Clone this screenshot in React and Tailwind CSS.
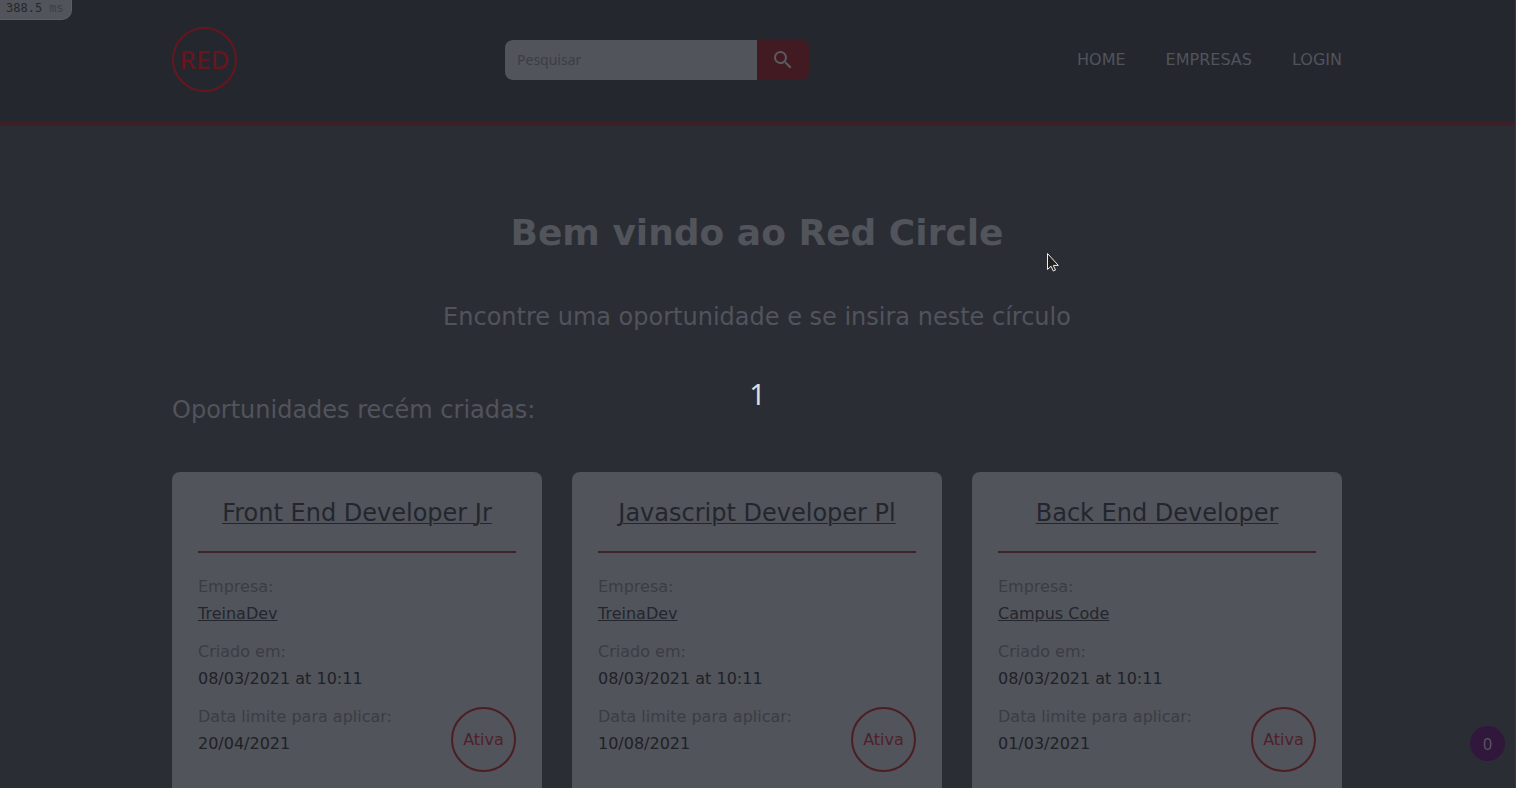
const jobs = [
  { title: "Front End Developer Jr", company: "TreinaDev", created: "08/03/2021 at 10:11", limit: "20/04/2021" },
  { title: "Javascript Developer Pl", company: "TreinaDev", created: "08/03/2021 at 10:11", limit: "10/08/2021" },
  { title: "Back End Developer", company: "Campus Code", created: "08/03/2021 at 10:11", limit: "01/03/2021" },
];

function Field({ label, children }) {
  return (
    <div className="mb-[11px] leading-[27px]">
      <dt className="text-[#3a3d42]">{label}</dt>
      <dd className="text-[#1f2126]">{children}</dd>
    </div>
  );
}

function JobCard({ job }) {
  return (
    <article className="relative rounded-lg bg-[#51545b] px-[26px] pt-[25px] pb-10">
      <h3 className="border-b-2 border-[#402229] pb-[22px] text-center text-2xl text-[#23262d]">
        <a href="#vaga" className="underline decoration-1 underline-offset-2">{job.title}</a>
      </h3>
      <dl className="mt-5">
        <Field label="Empresa:">
          <a href="#empresa" className="text-[#23262d] underline">{job.company}</a>
        </Field>
        <Field label="Criado em:">{job.created}</Field>
        <Field label="Data limite para aplicar:">{job.limit}</Field>
      </dl>
      <span className="absolute top-[235px] right-[26px] flex size-[65px] items-center justify-center rounded-full border-2 border-[#4c1d22] text-[#4f1f2a]">
        Ativa
      </span>
    </article>
  );
}

export default function App() {
  return (
    <div className="relative h-screen overflow-hidden border-r border-[#373941] bg-[#2b2d35] font-['DejaVu_Sans',sans-serif] text-base text-[#51545b]">
      <header className="border-b-4 border-[#3d1f25] bg-[#24272e] pr-px">
        <div className="mx-auto flex h-[122px] max-w-[1170px] items-center justify-between pb-[3px]">
          <a href="#inicio" className="flex size-[65px] items-center justify-center rounded-full border-2 border-[#66161e] font-['Noto_Sans',sans-serif] text-[26px] font-medium text-[#66161e]">
            RED
          </a>
          <form className="flex h-10" onSubmit={(e) => e.preventDefault()}>
            <input
              type="text"
              aria-label="Pesquisar"
              placeholder="Pesquisar"
              className="w-[252px] rounded-l-lg bg-[#51545b] px-3 font-['Noto_Sans',sans-serif] text-sm placeholder:text-[#3b3e44]"
            />
            <button type="submit" aria-label="Buscar" className="flex w-[52px] items-center justify-center rounded-r-lg bg-[#421b22]">
              <svg viewBox="0 0 24 24" className="size-6" fill="#5b5a61">
                <path d="M15.5 14h-.79l-.28-.27A6.47 6.47 0 0 0 16 9.5 6.5 6.5 0 1 0 9.5 16c1.61 0 3.09-.59 4.23-1.57l.27.28v.79l5 4.99L20.49 19l-4.99-5zm-6 0C7.01 14 5 11.99 5 9.5S7.01 5 9.5 5 14 7.01 14 9.5 11.99 14 9.5 14z" />
              </svg>
            </button>
          </form>
          <nav className="flex gap-10">
            <a href="#home">HOME</a>
            <a href="#empresas">EMPRESAS</a>
            <a href="#login">LOGIN</a>
          </nav>
        </div>
      </header>

      <div className="pr-px">
        <main className="mx-auto max-w-[1170px]">
          <h1 className="pt-[87px] text-center text-4xl font-bold">Bem vindo ao Red Circle</h1>
          <p className="mt-12 text-center text-2xl">Encontre uma oportunidade e se insira neste círculo</p>
          <h2 className="mt-[61px] text-2xl">Oportunidades recém criadas:</h2>
          <div className="mt-[46px] grid grid-cols-3 gap-[30px]">
            {jobs.map((job) => (
              <JobCard key={job.title} job={job} />
            ))}
          </div>
        </main>
      </div>

      <div className="absolute top-0 left-0 flex h-5 w-[72px] gap-[7px] rounded-br-[10px] border-r border-b border-[#5b5e64] bg-[#51545b] pt-px pl-[6px] font-['DejaVu_Sans_Mono',monospace] text-xs leading-[15px] text-[#24272e]">
        <span>388.5</span>
        <span className="text-[#3d4046]">ms</span>
      </div>

      <div className="absolute top-[378px] left-0 w-full text-center font-['Noto_Sans',sans-serif] text-[29px] leading-8 text-[#dcdcdc]">1</div>

      <div className="absolute right-[10px] bottom-[27px] flex size-[35px] items-center justify-center rounded-full bg-[#30173b] font-['Noto_Sans',sans-serif] text-[#5a5561]">0</div>

      <svg viewBox="0 0 14 21" className="absolute top-[252px] left-[1046px] h-[21px] w-[14px]" aria-hidden="true">
        <path d="M1.5 1.5v16l3.5-3.3 2.3 4.8 2.2-1-2.2-4.6h5z" fill="#22211f" stroke="#eee" strokeWidth="1" />
      </svg>
    </div>
  );
}
